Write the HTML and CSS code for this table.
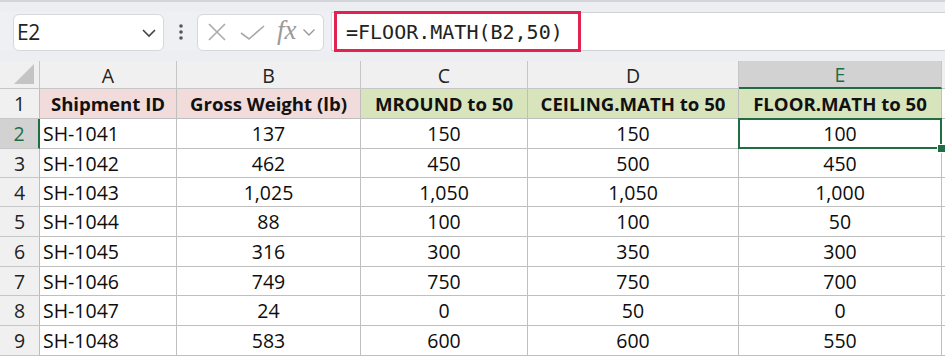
FILE: index.html
```html
<!DOCTYPE html>
<html>
<head>
<meta charset="utf-8">
<link rel="stylesheet" href="styles.css">
</head>
<body>
<div class="toolbar">
  <div class="fbar">
    <div class="left">
      <div class="namebox">
        <span class="nb-text">E2</span>
        <svg class="chev" width="16" height="10" viewBox="0 0 16 10"><path d="M2 2 L8 8 L14 2" fill="none" stroke="#444" stroke-width="1.6"/></svg>
      </div>
      <svg class="dots" width="6" height="18" viewBox="0 0 6 18"><circle cx="3" cy="3" r="1.8" fill="#555"/><circle cx="3" cy="9" r="1.8" fill="#555"/><circle cx="3" cy="15" r="1.8" fill="#555"/></svg>
      <div class="fxbox">
        <svg class="ico-x" width="20" height="18" viewBox="0 0 20 18"><path d="M2 1 L18 17 M18 1 L2 17" fill="none" stroke="#a9a9a9" stroke-width="1.6"/></svg>
        <svg class="ico-ok" width="26" height="16" viewBox="0 0 26 16"><path d="M1 8 L9 14 L24 1" fill="none" stroke="#a9a9a9" stroke-width="1.6"/></svg>
        <span class="fx">fx</span>
        <svg class="chev2" width="14" height="9" viewBox="0 0 14 9"><path d="M1.5 1.5 L7 7 L12.5 1.5" fill="none" stroke="#999" stroke-width="1.4"/></svg>
      </div>
    </div>
    <div class="formula">
      <div class="highlight">=FLOOR.MATH(B2,50)</div>
    </div>
  </div>
</div>
<div class="sheet">
  <div class="ch corner"><svg width="22" height="22" viewBox="0 0 22 22"><path d="M21 1 L21 21 L1 21 Z" fill="#c4c4c4"/></svg></div>
  <div class="ch">A</div>
  <div class="ch">B</div>
  <div class="ch">C</div>
  <div class="ch">D</div>
  <div class="ch ch-sel">E</div>
  <div class="ch ch-end"></div>

  <div class="rh">1</div>
  <div class="c hd pink">Shipment ID</div>
  <div class="c hd pink">Gross Weight (lb)</div>
  <div class="c hd green">MROUND to 50</div>
  <div class="c hd green">CEILING.MATH to 50</div>
  <div class="c hd green">FLOOR.MATH to 50</div>
  <div class="c end"></div>

  <div class="rh rh-sel">2</div>
  <div class="c l">SH-1041</div><div class="c">137</div><div class="c">150</div><div class="c">150</div><div class="c sel">100</div><div class="c end"></div>
  <div class="rh">3</div>
  <div class="c l">SH-1042</div><div class="c">462</div><div class="c">450</div><div class="c">500</div><div class="c">450</div><div class="c end"></div>
  <div class="rh">4</div>
  <div class="c l">SH-1043</div><div class="c">1,025</div><div class="c">1,050</div><div class="c">1,050</div><div class="c">1,000</div><div class="c end"></div>
  <div class="rh">5</div>
  <div class="c l">SH-1044</div><div class="c">88</div><div class="c">100</div><div class="c">100</div><div class="c">50</div><div class="c end"></div>
  <div class="rh">6</div>
  <div class="c l">SH-1045</div><div class="c">316</div><div class="c">300</div><div class="c">350</div><div class="c">300</div><div class="c end"></div>
  <div class="rh">7</div>
  <div class="c l">SH-1046</div><div class="c">749</div><div class="c">750</div><div class="c">750</div><div class="c">700</div><div class="c end"></div>
  <div class="rh">8</div>
  <div class="c l">SH-1047</div><div class="c">24</div><div class="c">0</div><div class="c">50</div><div class="c">0</div><div class="c end"></div>
  <div class="rh">9</div>
  <div class="c l">SH-1048</div><div class="c">583</div><div class="c">600</div><div class="c">600</div><div class="c">550</div><div class="c end"></div>
</div>
</body>
</html>
```
FILE: styles.css
```css
* { box-sizing: border-box; }
html, body { margin: 0; padding: 0; background: #ffffff; }
body { width: 945px; height: 357px; overflow: hidden; font-family: "Open Sans", "Liberation Sans", sans-serif; }

.toolbar {
  height: 61px;
  background: #eceef1;
  border-top: 2px solid #d2d5d9;
  padding-top: 10px;
}
.fbar {
  display: flex;
  height: 39px;
}
.left {
  width: 331px;
  display: flex;
  align-items: center;
  padding: 1px 0 0 13px;
  background: #eef0f3;
}
.namebox {
  width: 151px;
  height: 37px;
  background: #fff;
  border: 1px solid #d6d8db;
  border-radius: 6px;
  display: flex;
  align-items: center;
  justify-content: space-between;
  padding: 0 6px 0 3px;
  font-family: "Open Sans", sans-serif;
  font-size: 21px;
  color: #222;
}
.nb-text { letter-spacing: -0.3px; }
.chev { margin-top: 1px; }
.dots { margin-left: 14px; }
.fxbox {
  margin-left: 13px;
  width: 127px;
  height: 37px;
  background: #fff;
  border: 1px solid #d6d8db;
  border-radius: 6px;
  display: flex;
  align-items: center;
  padding-left: 9px;
}
.ico-ok { margin-left: 13px; margin-top: 1px; }
.fx {
  margin-left: 11px;
  font-family: "Liberation Serif", serif;
  font-style: italic;
  font-size: 27px;
  color: #9a9a9a;
  line-height: 1;
  margin-top: -3px;
}
.chev2 { margin-left: 5px; margin-top: 1px; }

.formula {
  flex: 1;
  background: #fff;
  border-top: 1px solid #cfd2d6;
  border-bottom: 1px solid #cfd2d6;
  border-left: 1px solid #d8dadd;
  display: flex;
  align-items: center;
  padding-left: 2px;
}
.highlight {
  height: 41px;
  width: 247px;
  margin: -2px 0;
  border: 3px solid #e0234f;
  display: flex;
  align-items: center;
  padding-left: 9px;
  font-family: "DejaVu Sans Mono", monospace;
  font-size: 20px;
  color: #222;
}

.sheet {
  display: grid;
  grid-template-columns: 40px 137px 184px 167px 211px 203px 1fr;
  grid-template-rows: 28px 30px 30px 29px 29px 30px 30px 29px 30px 30px;
  font-size: 19.5px;
  color: #0d0d0d;
}
.ch {
  background: #f0f0f0;
  border-right: 1px solid #c6c6c6;
  border-bottom: 1px solid #c6c6c6;
  display: flex;
  align-items: center;
  justify-content: center;
  color: #222;
  font-size: 19.5px;
  padding-top: 1px;
}
.corner { justify-content: flex-end; align-items: flex-end; padding: 0 4px 3px 0; }
.ch-sel {
  background: #d2d2d2;
  color: #1e6e42;
  border-bottom: 2px solid #1f6e43;
}
.ch-end { border-right: none; }
.rh {
  background: #f0f0f0;
  border-right: 1px solid #bdbdbd;
  border-bottom: 1px solid #c6c6c6;
  display: flex;
  align-items: center;
  justify-content: center;
  color: #222;
}
.rh-sel {
  background: #d2d2d2;
  color: #1e6e42;
  border-right: 2px solid #1f6e43;
}
.c {
  border-right: 1px solid #bfbfbf;
  border-bottom: 1px solid #bfbfbf;
  display: flex;
  align-items: center;
  justify-content: center;
  white-space: nowrap;
  overflow: visible;
}
.c.l { justify-content: flex-start; padding-left: 3px; }
.hd { font-weight: 700; font-size: 18.6px; color: #111; }
.pink { background: #f2dcdb; }
.green { background: #d8e4bc; }
.end { border-right: none; background: #fff; }
.sel { position: relative; }
.sel::before {
  content: "";
  position: absolute;
  left: -1px; top: -1px; right: -1px; bottom: -1px;
  border: 2px solid #1f6e43;
}
.sel::after {
  content: "";
  position: absolute;
  right: -5px; bottom: -5px;
  width: 7px; height: 7px;
  background: #1f6e43;
  border: 1px solid #fff;
}
```
